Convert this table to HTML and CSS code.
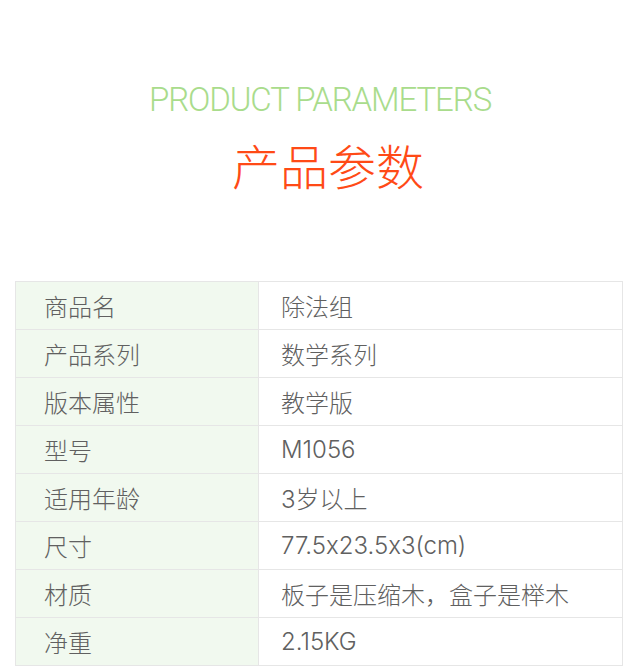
FILE: index.html
```html
<!DOCTYPE html>
<html lang="zh">
<head>
<meta charset="utf-8">
<link rel="stylesheet" href="styles.css">
</head>
<body>
<div class="page">
  <header class="head">
    <div class="en">PRODUCT PARAMETERS</div>
    <div class="cn">产品参数</div>
  </header>
  <table class="params">
    <tr><th>商品名</th><td>除法组</td></tr>
    <tr><th>产品系列</th><td>数学系列</td></tr>
    <tr><th>版本属性</th><td>教学版</td></tr>
    <tr><th>型号</th><td>M1056</td></tr>
    <tr><th>适用年龄</th><td>3岁以上</td></tr>
    <tr><th>尺寸</th><td>77.5x23.5x3(cm)</td></tr>
    <tr><th>材质</th><td>板子是压缩木，盒子是榉木</td></tr>
    <tr><th>净重</th><td>2.15KG</td></tr>
  </table>
</div>
</body>
</html>
```
FILE: styles.css
```css
html, body { margin: 0; padding: 0; background: #fff; }
.page { width: 640px; padding-top: 80px; }
.head { text-align: center; }
.en {
  font-family: Roboto, "Noto Sans", sans-serif;
  font-weight: 300;
  font-size: 33px;
  line-height: 40px;
  letter-spacing: -1.1px;
  color: #a9dc8c;
}
.cn {
  margin-top: 16px;
  padding-left: 16px;
  font-family: "Noto Sans CJK SC", sans-serif;
  font-weight: 300;
  font-size: 48px;
  line-height: 56px;
  color: #ff4a16;
}
.params {
  margin: 89px 0 0 15px;
  width: 608px;
  border-collapse: collapse;
  font-family: Inter, "Noto Sans CJK SC", sans-serif;
  font-feature-settings: "calt" 0;
  font-weight: 300;
  font-size: 24px;
  color: #606060;
}
.params th, .params td {
  height: 47px;
  padding: 0;
  border: 1px solid #e6e6e6;
  text-align: left;
  font-weight: 300;
  vertical-align: middle;
}
.params th {
  width: 214px;
  padding-left: 28px;
  background: #f1f9ef;
}
.params td { padding-left: 22px; }
```
